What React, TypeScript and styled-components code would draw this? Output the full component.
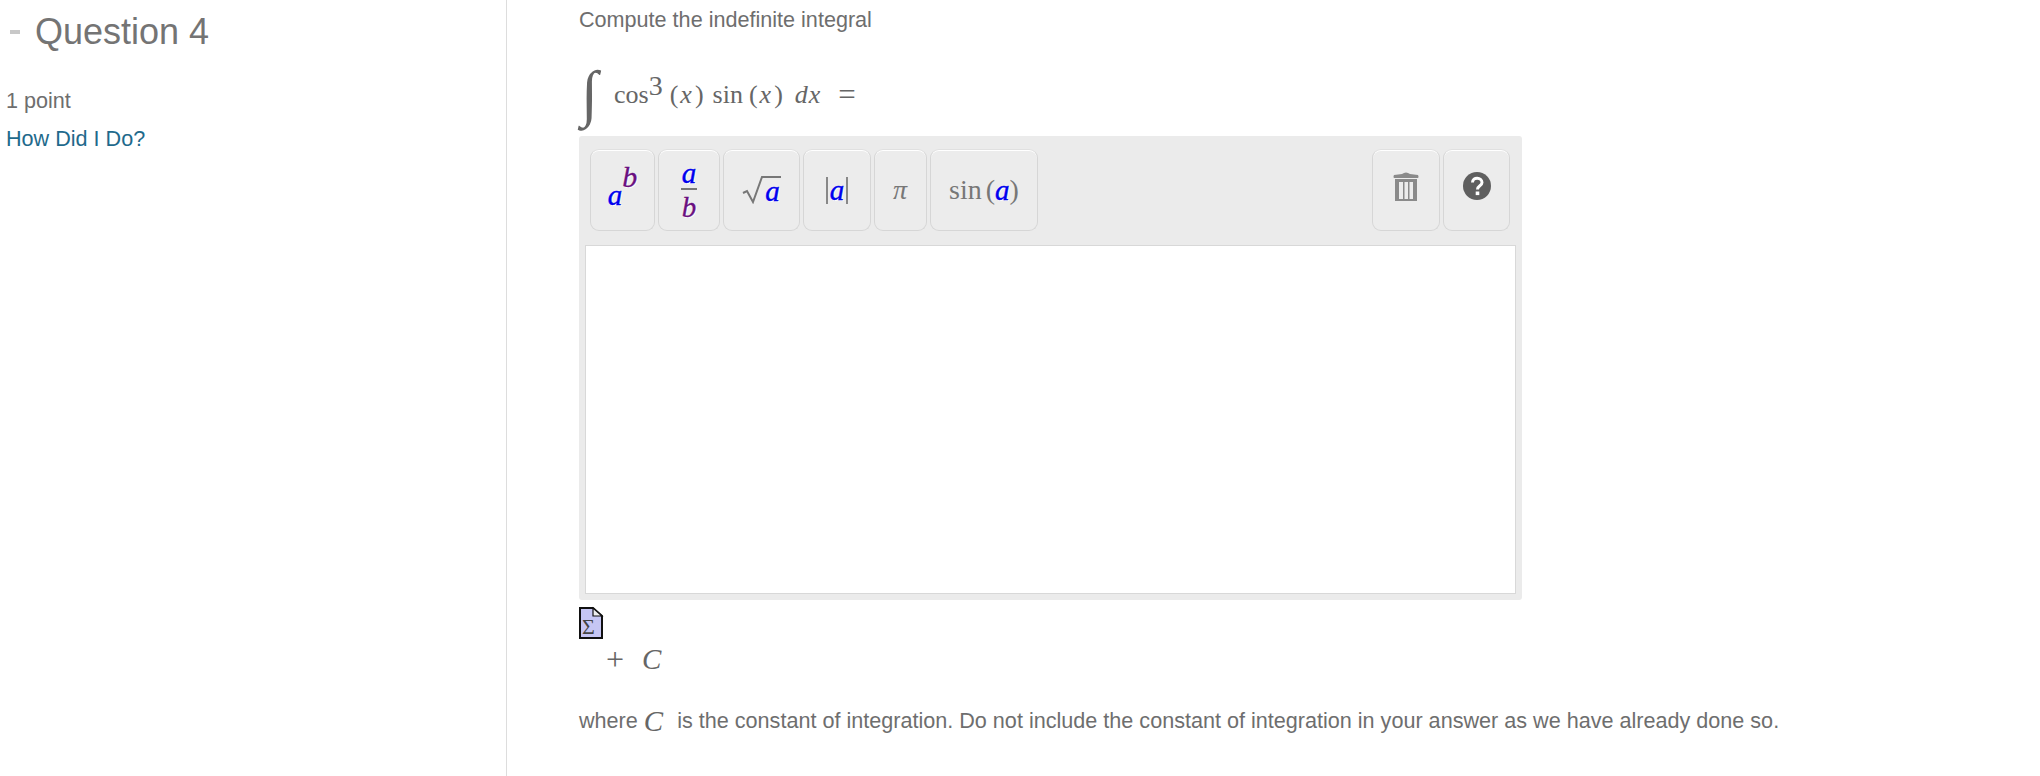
import { createGlobalStyle } from "styled-components";
import styled from "styled-components";

const GlobalStyle = createGlobalStyle`
  html, body {
    margin: 0;
    padding: 0;
    background: #fff;
  }
  body {
    font-family: "Liberation Sans", Arial, sans-serif;
    color: #6e6e6e;
  }
`;

const Page = styled.div`
  display: flex;
  width: 2040px;
  height: 776px;
  overflow: hidden;
`;

const Sidebar = styled.aside`
  width: 507px;
  flex: none;
  box-sizing: border-box;
  border-right: 1px solid #ddd;
  padding: 9px 0 0 6px;
`;

const Heading = styled.h2`
  display: flex;
  align-items: center;
  margin: 0;
  font-size: 36px;
  line-height: 46px;
  font-weight: 400;
  color: #747474;
`;

const Dash = styled.span`
  display: block;
  width: 10px;
  height: 4px;
  margin: 0 15px 0 4px;
  background: #c8c8c8;
`;

const Points = styled.div`
  margin-top: 33px;
  font-size: 21.6px;
  line-height: 26px;
  color: #6e6e6e;
`;

const HowLink = styled.a`
  display: block;
  margin-top: 12px;
  font-size: 21.6px;
  line-height: 26px;
  color: #1f6a8c;
`;

const Main = styled.main`
  flex: 1;
  padding-left: 72px;
`;

const Prompt = styled.p`
  margin: 7px 0 0;
  font-size: 21.6px;
  line-height: 26px;
  color: #6e6e6e;
`;

const MathFont = styled.span`
  font-family: "Liberation Serif", "Times New Roman", serif;
  color: #666;
`;

const MathRow = styled(MathFont)`
  display: flex;
  align-items: center;
  height: 69px;
  margin-top: 27px;
  font-size: 26px;
  white-space: pre;
`;

const Integral = styled.span`
  font-size: 62px;
  line-height: 66px;
  width: 33px;
  margin: -4px 0 0 2px;
`;

const Sup = styled.span`
  font-size: 28px;
  position: relative;
  top: -9px;
`;

const Ital = styled.i`
  font-style: italic;
  margin: 0 2px;
  letter-spacing: 1px;
`;

const Equals = styled.span`
  font-size: 31px;
`;

const Gap = styled.span<{ $w: number }>`
  display: inline-block;
  width: ${(p) => p.$w}px;
`;

const EditorPanel = styled.section`
  width: 943px;
  height: 464px;
  margin-top: 7px;
  box-sizing: border-box;
  padding: 13px 6px 6px;
  background: #ebebeb;
  border-radius: 3px;
  display: flex;
  flex-direction: column;
`;

const Toolbar = styled.div`
  display: flex;
  justify-content: space-between;
  height: 82px;
  padding: 0 6px 0 5px;
  flex: none;
`;

const ToolGroup = styled.div`
  display: flex;
  gap: 3px;
`;

const ToolButton = styled.button<{ $w: number }>`
  width: ${(p) => p.$w}px;
  height: 82px;
  padding: 0;
  box-sizing: border-box;
  border: 1px solid #d6d6d6;
  border-top-color: #e0e0e0;
  border-radius: 9px;
  background: #ececec;
  box-shadow: inset 0 1px 0 #fff;
  display: flex;
  align-items: center;
  justify-content: center;
  font-family: "Liberation Serif", "Times New Roman", serif;
  font-size: 28px;
  color: #777;
  white-space: pre;
`;

const VarA = styled.i`
  color: #0000ee;
  font-style: italic;
  font-size: 29px;
  -webkit-text-stroke: 0.4px #0000ee;
  text-shadow: 1px 1px 0 #fff;
`;

const VarB = styled.i`
  color: #6a0f80;
  font-style: italic;
  font-size: 29px;
  -webkit-text-stroke: 0.3px #6a0f80;
  text-shadow: 1px 1px 0 #fff;
`;

const SupB = styled(VarB)`
  font-size: 30px;
  position: relative;
  top: -13px;
`;

const PowerA = styled(VarA)`
  position: relative;
  top: 5px;
`;

const Frac = styled.span`
  display: flex;
  flex-direction: column;
  align-items: center;
  line-height: 30px;
`;

const FracBar = styled.span`
  width: 16px;
  height: 2px;
  background: #777;
  margin: 0 0 2px;
`;

const Bars = styled.span`
  display: flex;
  align-items: center;
  gap: 2px;
`;

const Bar = styled.span`
  width: 2px;
  height: 27px;
  background: #888;
`;

const RootWrap = styled.span`
  display: flex;
  align-items: flex-start;
  height: 28px;
`;

const RootTop = styled.span`
  border-top: 2px solid #777;
  line-height: 26px;
  padding: 0 1px;
`;

const IconBox = styled.span`
  display: flex;
  margin-bottom: 8px;
`;

const Editor = styled.div`
  flex: 1;
  margin-top: 14px;
  background: #fff;
  border: 1px solid #d8d8d8;
`;

const FileIcon = styled.svg`
  display: block;
  margin-top: 7px;
  overflow: visible;
`;

const PlusRow = styled(MathFont)`
  display: flex;
  align-items: center;
  height: 30px;
  margin: 5px 0 0 27px;
  font-size: 29px;
  white-space: pre;
`;

const Plus = styled.span`
  font-size: 32px;
  font-weight: 400;
`;

const Note = styled.p`
  display: flex;
  align-items: center;
  margin: 32px 0 0;
  font-size: 21.6px;
  line-height: 30px;
  color: #6e6e6e;
  white-space: pre;
`;

const NoteC = styled(MathFont)`
  font-size: 29px;
  font-style: italic;
  margin: 0 14px 0 6px;
`;

export default function App() {
  return (
    <>
      <GlobalStyle />
      <Page>
        <Sidebar>
          <Heading>
            <Dash />
            Question 4
          </Heading>
          <Points>1 point</Points>
          <HowLink>How Did I Do?</HowLink>
        </Sidebar>
        <Main>
          <Prompt>Compute the indefinite integral</Prompt>
          <MathRow>
            <Integral>∫</Integral>
            cos<Sup>3</Sup>
            <Gap $w={7} />(<Ital>x</Ital>)<Gap $w={9} />sin<Gap $w={6} />(<Ital>x</Ital>)
            <Gap $w={10} />
            <Ital>dx</Ital>
            <Gap $w={15} />
            <Equals>=</Equals>
          </MathRow>
          <EditorPanel>
            <Toolbar>
              <ToolGroup>
                <ToolButton $w={65}>
                  <PowerA>a</PowerA>
                  <SupB>b</SupB>
                </ToolButton>
                <ToolButton $w={62}>
                  <Frac>
                    <VarA>a</VarA>
                    <FracBar />
                    <VarB>b</VarB>
                  </Frac>
                </ToolButton>
                <ToolButton $w={77}>
                  <RootWrap>
                    <svg width="22" height="28" viewBox="0 0 22 28">
                      <path d="M1 17 L5 15 L11 26 L20 1 L22 1" fill="none" stroke="#777" strokeWidth="2" />
                    </svg>
                    <RootTop>
                      <VarA>a</VarA>
                    </RootTop>
                  </RootWrap>
                </ToolButton>
                <ToolButton $w={68}>
                  <Bars>
                    <Bar />
                    <VarA>a</VarA>
                    <Bar />
                  </Bars>
                </ToolButton>
                <ToolButton $w={53}>
                  <Ital>π</Ital>
                </ToolButton>
                <ToolButton $w={108}>
                  sin<Gap $w={4} />(<VarA>a</VarA>)
                </ToolButton>
              </ToolGroup>
              <ToolGroup>
                <ToolButton $w={68}>
                  <IconBox>
                    <svg width="26" height="29" viewBox="0 0 26 29">
                      <path d="M9 2 Q13 -1 17 2 L25 3 Q26 5 25 6 L1 6 Q0 5 1 3 Z" fill="#8a8a8a" />
                      <path d="M2 7 H24 V29 H2 Z M6 10 V27 H10 V10 Z M11.5 10 V27 H15 V10 Z M16.5 10 V27 H20 V10 Z" fill="#8a8a8a" fillRule="evenodd" />
                    </svg>
                  </IconBox>
                </ToolButton>
                <ToolButton $w={67}>
                  <IconBox>
                    <svg width="28" height="28" viewBox="0 0 28 28">
                      <circle cx="14" cy="14" r="14" fill="#5f5f5f" />
                      <path d="M9.5 10.5 C9.5 4.5 19 5 19 10.5 C19 14 14.5 13.5 14.5 17.5" fill="none" stroke="#fff" strokeWidth="3" />
                      <rect x="12.7" y="19.5" width="3.6" height="3.6" fill="#fff" />
                    </svg>
                  </IconBox>
                </ToolButton>
              </ToolGroup>
            </Toolbar>
            <Editor />
          </EditorPanel>
          <FileIcon width="24" height="32" viewBox="0 0 24 32">
            <path d="M1 1 H14 L23 9 V31 H1 Z" fill="#c6c6f4" stroke="#111" strokeWidth="2" />
            <path d="M14 1 V9 H23 Z" fill="#eee" stroke="#111" strokeWidth="1.2" />
            <text x="3" y="27" fontFamily="Liberation Serif, serif" fontSize="22" fill="#444">Σ</text>
          </FileIcon>
          <PlusRow>
            <Plus>+</Plus>
            <Gap $w={16} />
            <Ital>C</Ital>
          </PlusRow>
          <Note>
            where<NoteC>C</NoteC>is the constant of integration. Do not include the constant of integration in your answer as we have already done so.
          </Note>
        </Main>
      </Page>
    </>
  );
}
